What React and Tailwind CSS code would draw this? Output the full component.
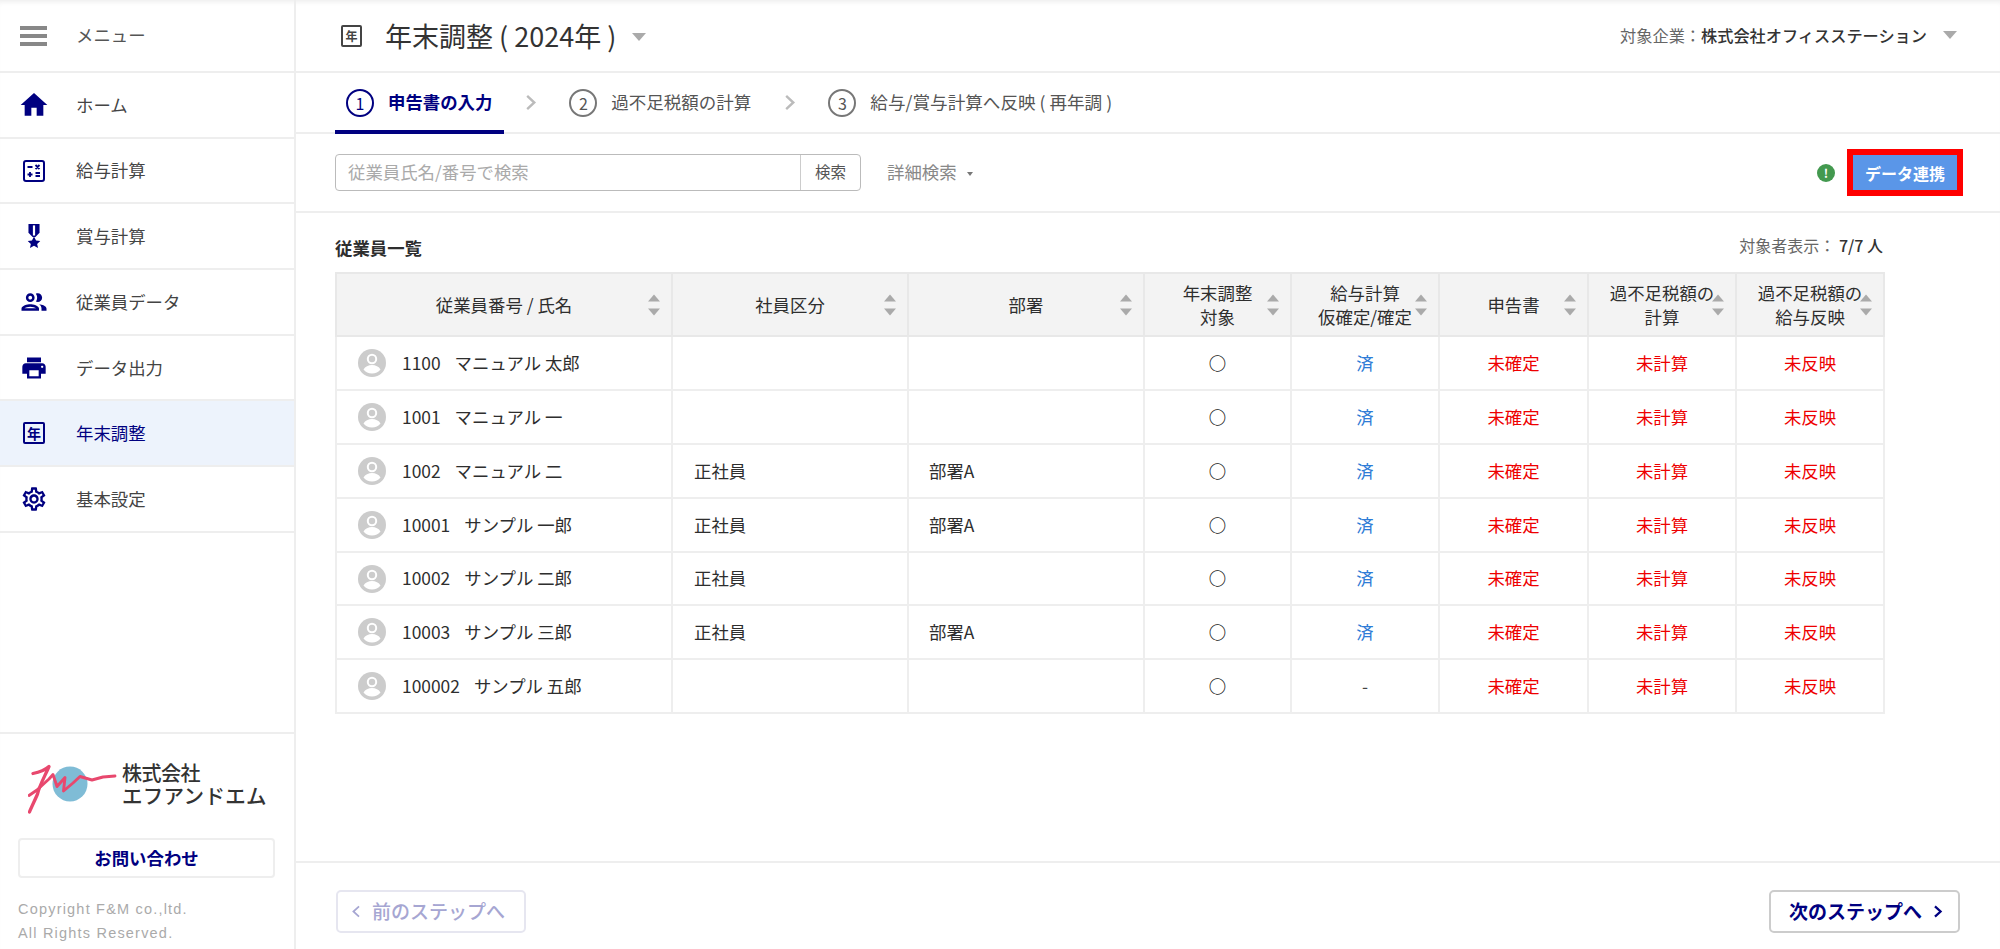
import React from "react";
import { MdHome, MdPrint, MdOutlineSettings } from "react-icons/md";

const NAVY = "#000080";

function Calc({ size = 22 }) {
  return (
    <svg width={size} height={size} viewBox="0 0 22 22" fill="none" stroke={NAVY}>
      <rect x="1" y="1" width="20" height="20" rx="2" strokeWidth="2" />
      <path d="M4.5 7h5M12.5 5l4 4M16.5 5l-4 4M4.5 14.5h5M7 12v5M12.5 13h4.5M12.5 16h4.5" strokeWidth="1.8" />
    </svg>
  );
}
function Medal() {
  return (
    <svg width="14" height="24" viewBox="4 0 14 26" fill={NAVY}>
      <path d="M5 0h12v9.500L12.500 14h-3L5 9.500z" />
      <path d="M9.800 1.500h2.400v11h-2.400z" fill="#fff" />
      <path d="M11 13.600l2.200 4.300 4.600.5-3.400 3.200 1 4.400-4.400-2.400-4.400 2.400 1-4.400-3.400-3.200 4.600-.5z" />
    </svg>
  );
}
function People() {
  return (
    <svg width="30" height="30" viewBox="0 0 24 24" fill={NAVY}>
      <path d="M9 13.750c-2.340 0-7 1.170-7 3.500V19h14v-1.750c0-2.330-4.660-3.500-7-3.500zM4.340 17c.84-.58 2.870-1.250 4.660-1.250s3.820.67 4.660 1.250H4.340zM9 12c1.930 0 3.500-1.570 3.500-3.500S10.930 5 9 5 5.500 6.570 5.500 8.500 7.070 12 9 12zm0-5c.83 0 1.500.67 1.500 1.500S9.830 10 9 10s-1.500-.67-1.500-1.500S8.170 7 9 7zm7.040 6.810c1.160.84 1.960 1.960 1.960 3.440V19h4v-1.750c0-2.020-3.500-3.170-5.960-3.440zM15 12c1.930 0 3.500-1.570 3.500-3.500S16.930 5 15 5c-.54 0-1.040.13-1.500.35.63.89 1 1.980 1 3.150s-.37 2.260-1 3.150c.46.22.96.35 1.500.35z" />
    </svg>
  );
}
function YearBox() {
  return (
    <span className="flex h-[22px] w-[22px] items-center justify-center rounded-[2px] border-2 border-[#000080] text-[14px] font-bold leading-none text-[#000080]">
      年
    </span>
  );
}
function Avatar() {
  return (
    <svg width="28" height="28" viewBox="0 0 28 28" className="shrink-0">
      <circle cx="14" cy="14" r="14" fill="#cccccc" />
      <circle cx="14" cy="10" r="4.200" fill="#cccccc" stroke="#fff" strokeWidth="2" />
      <path d="M5.500 20.500c1.500-3 5-4.500 8.500-4.500s7 1.500 8.500 4.500c-2 2.500-5 4-8.500 4s-6.500-1.500-8.500-4z" fill="#fff" />
    </svg>
  );
}
function Chevron({ left = false, color = "#bbbbbb", sw = 2.200, w = 12, h = 17 }) {
  return (
    <svg width={w} height={h} viewBox="0 0 11 15" fill="none" stroke={color} strokeWidth={sw} className="shrink-0">
      <path d={left ? "M9 1.500 2.500 7.500 9 13.500" : "M2 1.500 8.500 7.500 2 13.500"} />
    </svg>
  );
}
function Sort() {
  return (
    <span className="absolute right-[11px] top-1/2 flex -translate-y-1/2 flex-col gap-[7px]">
      <span className="h-0 w-0 border-x-[6px] border-b-[7px] border-x-transparent border-b-[#aaaaaa]" />
      <span className="h-0 w-0 border-x-[6px] border-t-[7px] border-x-transparent border-t-[#aaaaaa]" />
    </span>
  );
}

const menu = [
  { label: "ホーム", icon: <MdHome size={32} color={NAVY} /> },
  { label: "給与計算", icon: <Calc /> },
  { label: "賞与計算", icon: <Medal /> },
  { label: "従業員データ", icon: <People /> },
  { label: "データ出力", icon: <MdPrint size={28} color={NAVY} /> },
  { label: "年末調整", icon: <YearBox />, active: true },
  { label: "基本設定", icon: <MdOutlineSettings size={28} color={NAVY} /> },
];

const rows = [
  ["1100", "マニュアル 太郎", "", "", "済"],
  ["1001", "マニュアル 一", "", "", "済"],
  ["1002", "マニュアル 二", "正社員", "部署A", "済"],
  ["10001", "サンプル 一郎", "正社員", "部署A", "済"],
  ["10002", "サンプル 二郎", "正社員", "", "済"],
  ["10003", "サンプル 三郎", "正社員", "部署A", "済"],
  ["100002", "サンプル 五郎", "", "", "-"],
];

const heads = [
  ["従業員番号 / 氏名"],
  ["社員区分"],
  ["部署"],
  ["年末調整", "対象"],
  ["給与計算", "仮確定/確定"],
  ["申告書"],
  ["過不足税額の", "計算"],
  ["過不足税額の", "給与反映"],
];

function Logo() {
  return (
    <div className="flex items-start pl-[28px] pt-[30px]">
      <svg width="104" height="58" viewBox="0 0 104 58" fill="none" className="shrink-0">
        <circle cx="42" cy="20" r="17.500" fill="#7fbcd6" />
        <g stroke="#e8486e" strokeLinecap="round" strokeLinejoin="round" fill="none">
          <path d="M5 9.500C10 8.500 16 7 21 2.500 17 12 12 20 9.500 30 7 36 3.500 43 1.500 48" strokeWidth="3.300" />
          <path d="M1 31.500 9 26 21 15 25 10.500 29 22.500 37 13.500 35.500 27 45 19 52 12.500 64 16 75 13 87 12" strokeWidth="2.900" />
        </g>
      </svg>
      <div className="-ml-[10px] -mt-[3px] font-['Noto_Sans_CJK_JP',sans-serif] font-medium text-[#333333]">
        <div className="text-[20px] leading-[23px] tracking-[-0.5px]">株式会社</div>
        <div className="text-[20.500px] leading-[23px] tracking-[0.3px]">エフアンドエム</div>
      </div>
    </div>
  );
}

export default function App() {
  return (
    <div className="flex h-screen w-full overflow-hidden bg-white font-['Noto_Sans_CJK_JP','Noto_Sans',sans-serif] text-[17.4px] text-[#2e2e2e] shadow-[inset_0_5px_5px_-3px_rgba(0,0,0,0.07)]">
      {/* sidebar */}
      <aside className="flex w-[296px] shrink-0 flex-col border-r-2 border-[#eeeeee]">
        <div className="flex h-[73px] shrink-0 items-center border-b-2 border-[#eeeeee]">
          <div className="flex w-[76px] justify-start pl-[20px]">
            <span className="flex w-[27px] flex-col gap-[4px]">
              <span className="h-[4px] bg-[#888888]" />
              <span className="h-[4px] bg-[#888888]" />
              <span className="h-[4px] bg-[#888888]" />
            </span>
          </div>
          <span className="text-[#555555]">メニュー</span>
        </div>
        {menu.map((m) => (
          <div
            key={m.label}
            className={`flex h-[65.7px] shrink-0 items-center border-b-2 border-[#eeeeee] ${m.active ? "bg-[#edf3fc] text-[#000080]" : "text-[#444444]"}`}
          >
            <div className="flex w-[76px] justify-center pr-[8px]">{m.icon}</div>
            <span>{m.label}</span>
          </div>
        ))}
        <div className="mt-auto h-[217px] shrink-0 border-t-2 border-[#eeeeee]">
          <Logo />
          <button className="mx-[18px] mt-[16px] flex h-[40px] w-[257px] items-center justify-center rounded-[4px] border-2 border-[#eeeeee] text-[17.400px] font-bold text-[#000080]">
            お問い合わせ
          </button>
          <div className="mt-[19px] pl-[18px] font-['Liberation_Sans',sans-serif] text-[14.5px] leading-[24px] tracking-[1.2px] text-[#aaaaaa]">
            <div>Copyright F&amp;M co.,ltd.</div>
            <div>All Rights Reserved.</div>
          </div>
        </div>
      </aside>

      {/* main */}
      <main className="flex min-w-0 flex-1 flex-col">
        <header className="flex h-[73px] shrink-0 items-center justify-between border-b-2 border-[#eeeeee] pl-[45px] pr-[43px]">
          <div className="flex items-center">
            <span className="flex h-[22px] w-[21px] items-center justify-center rounded-[2px] border-2 border-[#444444] text-[12px] font-bold leading-none text-[#444444]">
              年
            </span>
            <span className="ml-[23px] text-[27px] leading-none text-[#333333]">年末調整 ( 2024年 )</span>
            <span className="ml-[16px] mt-[2px] h-0 w-0 border-x-[7px] border-t-[8px] border-x-transparent border-t-[#aaaaaa]" />
          </div>
          <div className="flex items-center text-[16.200px]">
            <span className="text-[#666666]">対象企業：</span>
            <span className="font-medium text-[#333333]">株式会社オフィスステーション</span>
            <span className="ml-[16px] h-0 w-0 border-x-[7px] border-t-[8px] border-x-transparent border-t-[#aaaaaa]" />
          </div>
        </header>

        <nav className="flex h-[61px] shrink-0 items-stretch border-b-2 border-[#eeeeee] pl-[39px]">
          <div className="-mb-[2px] flex items-center border-b-4 border-[#000080] pl-[11px] pr-[12px] pt-[2px]">
            <span className="flex h-[28px] w-[28px] items-center justify-center rounded-full border-2 border-[#000080] text-[16px] text-[#000080]">1</span>
            <span className="ml-[14px] font-bold text-[#000080]">申告書の入力</span>
          </div>
          <div className="ml-[21px] flex items-center">
            <Chevron />
          </div>
          <div className="ml-[32px] flex items-center">
            <span className="flex h-[28px] w-[28px] items-center justify-center rounded-full border-2 border-[#777777] text-[16px] text-[#555555]">2</span>
            <span className="ml-[14px] text-[17.500px] text-[#555555]">過不足税額の計算</span>
          </div>
          <div className="ml-[33px] flex items-center">
            <Chevron />
          </div>
          <div className="ml-[32px] flex items-center">
            <span className="flex h-[28px] w-[28px] items-center justify-center rounded-full border-2 border-[#777777] text-[16px] text-[#555555]">3</span>
            <span className="ml-[14px] text-[17.600px] text-[#555555]">給与/賞与計算へ反映 ( 再年調 )</span>
          </div>
        </nav>

        <section className="flex h-[79px] shrink-0 items-center border-b-2 border-[#eeeeee] pl-[39px] pr-[37px]">
          <div className="-mt-[1px] flex h-[37px] w-[526px] rounded-[4px] border border-[#bbbbbb]">
            <span className="flex flex-1 items-center pl-[12px] text-[#aaaaaa]">従業員氏名/番号で検索</span>
            <span className="flex w-[60px] items-center justify-center border-l border-[#cccccc] text-[15.5px] text-[#555555]">検索</span>
          </div>
          <span className="ml-[26px] text-[#888888]">詳細検索</span>
          <span className="ml-[10px] mt-[3px] h-0 w-0 border-x-[3.5px] border-t-[4px] border-x-transparent border-t-[#777777]" />
          <span className="ml-auto flex h-[18px] w-[18px] items-center justify-center rounded-full bg-[#43994f] text-[12px] font-bold leading-none text-white">!</span>
          <button className="ml-[12px] flex h-[47px] w-[116px] items-center justify-center border-[6px] border-[#ff0000] bg-[#5a96e8] text-[16px] font-bold text-white">
            データ連携
          </button>
        </section>

        <section className="flex-1 pl-[39px] pt-[22px]">
          <div className="flex h-[37px] w-[1548px] items-start justify-between">
            <span className="font-bold">従業員一覧</span>
            <span className="-mt-[2px] text-[16px] text-[#666666]">
              対象者表示：<span className="font-medium text-[#333333]"> 7/7 人</span>
            </span>
          </div>
          <table className="w-[1548px] table-fixed border-collapse">
            <colgroup>
              <col className="w-[336px]" />
              <col className="w-[236px]" />
              <col className="w-[236px]" />
              <col className="w-[147px]" />
              <col className="w-[148px]" />
              <col className="w-[149px]" />
              <col className="w-[148px]" />
              <col className="w-[148px]" />
            </colgroup>
            <thead>
              <tr className="h-[63px] bg-[#f3f3f3]">
                {heads.map((h, i) => (
                  <th key={i} className="relative border-2 border-[#e8e8e8] text-center text-[17.4px] font-normal leading-[24px] text-[#2e2e2e]">
                    {h.map((line) => (
                      <div key={line} className="whitespace-nowrap">{line}</div>
                    ))}
                    <Sort />
                  </th>
                ))}
              </tr>
            </thead>
            <tbody>
              {rows.map((r) => (
                <tr key={r[0]} className="h-[53.9px]">
                  <td className="border-2 border-[#eeeeee] pl-[21px]">
                    <div className="flex items-center">
                      <Avatar />
                      <span className="ml-[16px] whitespace-nowrap">{r[0]}</span>
                      <span className="ml-[14px] whitespace-nowrap">{r[1]}</span>
                    </div>
                  </td>
                  <td className="border-2 border-[#eeeeee] pl-[21px]">{r[2]}</td>
                  <td className="border-2 border-[#eeeeee] pl-[20px]">{r[3]}</td>
                  <td className="border-2 border-[#eeeeee] text-center font-bold text-[#222222]">○</td>
                  <td className={`border-2 border-[#eeeeee] text-center ${r[4] === "済" ? "text-[#2e7bd6]" : "text-[#444444]"}`}>{r[4]}</td>
                  <td className="border-2 border-[#eeeeee] text-center text-[#ee0000]">未確定</td>
                  <td className="border-2 border-[#eeeeee] text-center text-[#ee0000]">未計算</td>
                  <td className="border-2 border-[#eeeeee] text-center text-[#ee0000]">未反映</td>
                </tr>
              ))}
            </tbody>
          </table>
        </section>

        <footer className="flex h-[88px] shrink-0 items-start justify-between border-t-2 border-[#eeeeee] pl-[40px] pr-[40px] pt-[27px]">
          <button className="flex h-[43px] w-[190px] items-center rounded-[5px] border-2 border-[#e6e6f0] pl-[13px] text-[19px] font-medium text-[#a6a6d2]">
            <Chevron left color="#a6a6d2" sw={2} w={10} h={13} />
            <span className="ml-[11px]">前のステップへ</span>
          </button>
          <button className="flex h-[43px] w-[191px] items-center rounded-[5px] border-2 border-[#cccccc] pl-[18px] text-[19px] font-bold text-[#000080]">
            <span>次のステップへ</span>
            <span className="ml-[11px]"><Chevron color={NAVY} sw={2.600} w={10} h={13} /></span>
          </button>
        </footer>
      </main>
    </div>
  );
}
